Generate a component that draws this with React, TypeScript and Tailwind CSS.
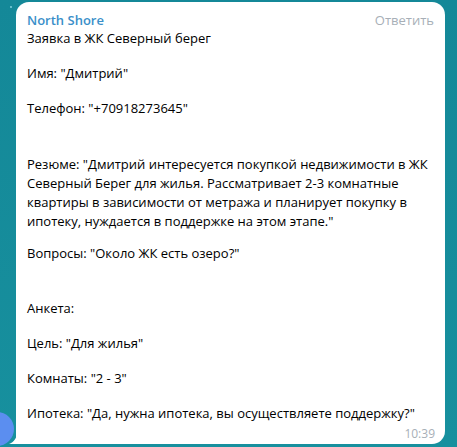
import React from "react";

export default function App() {
  const font = { fontFamily: '"Open Sans", "Noto Sans", sans-serif' };
  return (
    <div
      className="relative w-[457px] h-[447px] overflow-hidden bg-gradient-to-b from-[#148898] to-[#17909e]"
      style={font}
    >
      <div className="absolute left-[-20px] top-[412px] w-[34px] h-[34px] rounded-full bg-[#5b8ef0]" />
      <div className="absolute left-[10px] top-[6px] w-[2px] h-[2px] rounded-full bg-[#7fd0dc]" />
      <div className="relative ml-[16px] mt-[2px] w-[429px] h-[442px] bg-white rounded-[13px] rounded-bl-none">
        <svg
          className="absolute left-[-7px] bottom-0"
          width="8"
          height="12"
          viewBox="0 0 8 12"
        >
          <path d="M8 0 C8 6 5 10 0 12 L8 12 Z" fill="#ffffff" />
        </svg>
        <div className="flex items-start justify-between pl-[11px] pr-[11px] pt-[9px]">
          <div className="text-[13px] leading-[18px] font-semibold text-[#3a8fc9]">
            North Shore
          </div>
          <div className="text-[13px] leading-[18px] text-[#a7afb7]">Ответить</div>
        </div>
        <div className="pl-[11px] pr-[11px] text-[13px] leading-[19px] text-[#000000]">
          <div className="mt-0">Заявка в ЖК Северный берег</div>
          <div className="mt-[16px]">Имя: "Дмитрий"</div>
          <div className="mt-[16px]">Телефон: "+70918273645"</div>
          <div className="mt-[37px]">
            Резюме: "Дмитрий интересуется покупкой недвижимости в ЖК Северный Берег для жилья.
            Рассматривает 2-3 комнатные квартиры в зависимости от метража и планирует покупку в
            ипотеку, нуждается в поддержке на этом этапе."
          </div>
          <div className="mt-[13px]">Вопросы: "Около ЖК есть озеро?"</div>
          <div className="mt-[36px]">Анкета:</div>
          <div className="mt-[16px]">Цель: "Для жилья"</div>
          <div className="mt-[16px]">Комнаты: "2 - 3"</div>
          <div className="mt-[16px]">Ипотека: "Да, нужна ипотека, вы осуществляете поддержку?"</div>
        </div>
        <div className="mt-[3px] flex justify-end pr-[10px] text-[12px] leading-[16px] text-[#a7afb7]">
          10:39
        </div>
      </div>
    </div>
  );
}
